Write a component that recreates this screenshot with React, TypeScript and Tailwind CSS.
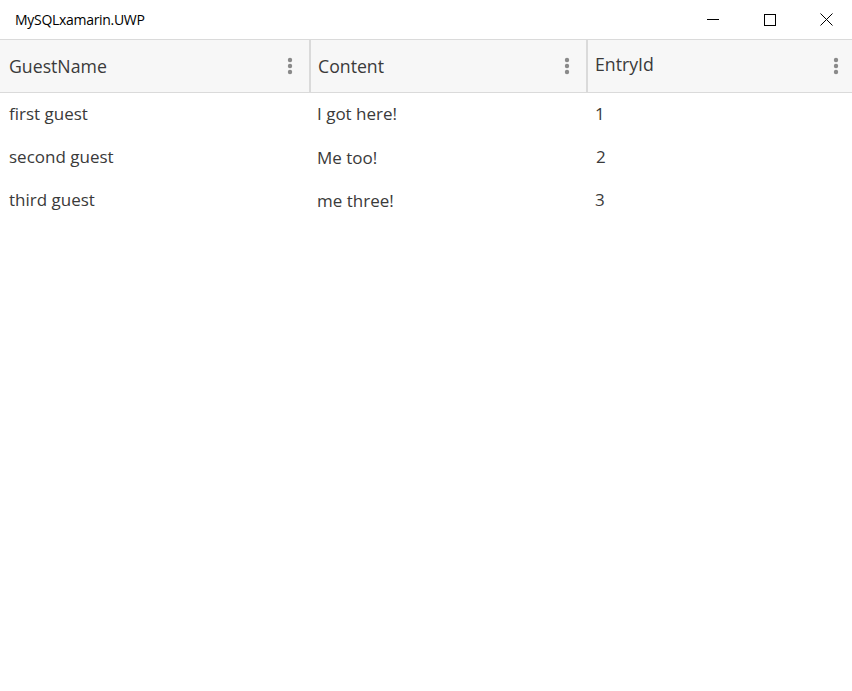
import React from 'react';

const rows = [
  { name: 'first guest', content: 'I got here!', id: '1' },
  { name: 'second guest', content: 'Me too!', id: '2' },
  { name: 'third guest', content: 'me three!', id: '3' },
];

function Dots() {
  return (
    <svg width="6" height="18" viewBox="0 0 6 18" className="shrink-0">
      <circle cx="3" cy="3" r="2.2" fill="#8a8a8a" />
      <circle cx="3" cy="9" r="2.2" fill="#8a8a8a" />
      <circle cx="3" cy="15" r="2.2" fill="#8a8a8a" />
    </svg>
  );
}

function HeaderCell({ label, first, last }: { label: string; first?: boolean; last?: boolean }) {
  return (
    <div
      className={`flex items-center justify-between h-full pl-[7px] ${last ? 'pr-[13px]' : 'pr-[16px]'} ${
        first ? 'pl-[9px]' : 'border-l-2 border-[#dadada]'
      }`}
    >
      <span className={`text-[17.7px] text-[#3a3a3a] ${last ? '-mt-[4px]' : ''}`}>{label}</span>
      <Dots />
    </div>
  );
}

export default function App() {
  return (
    <div className="w-[852px] h-[691px] bg-white font-['Open_Sans',sans-serif] overflow-hidden">
      {/* Title bar */}
      <div className="h-[39px] flex items-center justify-between">
        <span className="pl-[15px] text-[14px] text-black tracking-[-0.3px]">MySQLxamarin.UWP</span>
        <div className="flex h-full -mr-[3px]">
          <div className="w-[57px] h-full flex items-center justify-center">
            <div className="w-[12px] h-px bg-black" />
          </div>
          <div className="w-[57px] h-full flex items-center justify-center">
            <div className="w-[12px] h-[12px] border border-black" />
          </div>
          <div className="w-[57px] h-full flex items-center justify-center">
            <svg width="13" height="13" viewBox="0 0 13 13">
              <path d="M0.5 0.5 L12.5 12.5 M12.5 0.5 L0.5 12.5" stroke="#000" strokeWidth="1" />
            </svg>
          </div>
        </div>
      </div>

      {/* Header */}
      <div className="grid grid-cols-[309px_277px_1fr] h-[54px] bg-[#f7f7f7] border-y border-[#dadada]">
        <HeaderCell label="GuestName" first />
        <HeaderCell label="Content" />
        <HeaderCell label="EntryId" last />
      </div>

      {/* Rows */}
      <div className="-mt-px">
        {rows.map((r, i) => (
          <div key={r.id} className="grid grid-cols-[309px_277px_1fr] h-[43px] items-center text-[17px] text-[#3a3a3a]">
            <span className="pl-[9px]">{r.name}</span>
            <span className={`pl-[8px] ${i > 0 ? 'mt-[2px]' : ''}`}>{r.content}</span>
            <span className={`${i === 1 ? 'pl-[10px]' : 'pl-[9px]'}`}>{r.id}</span>
          </div>
        ))}
      </div>
    </div>
  );
}
